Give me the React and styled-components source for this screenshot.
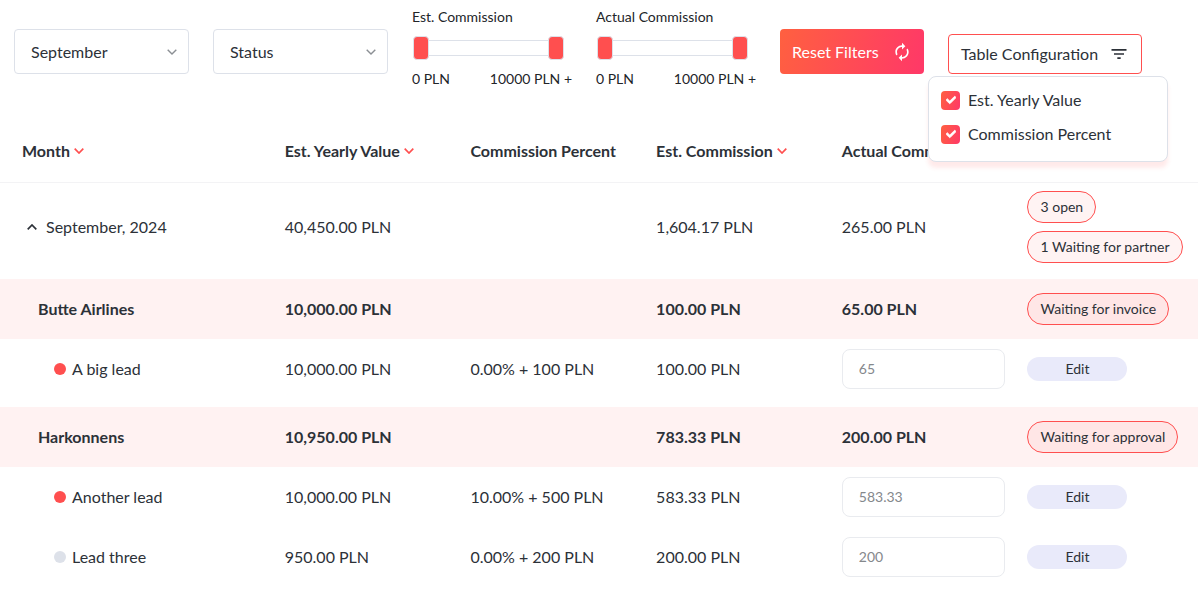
import React, { useState } from "react";
import styled, { createGlobalStyle } from "styled-components";
import { MdAutorenew, MdFilterList } from "react-icons/md";
import { FaCheck } from "react-icons/fa";

const GlobalStyle = createGlobalStyle`
  * {
    box-sizing: border-box;
  }
  body {
    margin: 0;
    background: #fff;
    color: #2c3138;
    font-family: "Lato", sans-serif;
    font-size: 16px;
    line-height: 24px;
  }
  button, input, select {
    font-family: inherit;
    color: inherit;
  }
`;

const Toolbar = styled.section`
  display: flex;
  align-items: center;
  gap: 24px;
  padding: 5px 14px 23px;
`;

const SelectBox = styled.div`
  display: grid;
  grid-template-columns: 1fr 32px;
  align-items: center;
  width: 175px;
  height: 45px;
  border: 1px solid #dde1e9;
  border-radius: 4px;
  color: #8b8f94;
`;

const StyledSelect = styled.select`
  grid-area: 1 / 1 / 2 / 3;
  height: 100%;
  padding: 0 32px 0 16px;
  border: none;
  border-radius: 4px;
  background: transparent;
  color: #2c3138;
  font-size: 16px;
  appearance: none;
`;

const SelectIcon = styled.span`
  grid-area: 1 / 2;
  display: flex;
  justify-content: center;
  pointer-events: none;
`;

const RangeGroup = styled.div`
  width: 160px;
  padding-bottom: 7px;
  color: #222529;
  font-size: 14px;
`;

const RangeSlider = styled.div`
  display: grid;
  align-items: center;
  height: 38px;
  margin: 0 8px 0 1px;
`;

const RangeTrack = styled.div`
  grid-area: 1 / 1;
  height: 16px;
  margin: 0 8px;
  border: 1px solid #dde1e9;
`;

const RangeInput = styled.input`
  grid-area: 1 / 1;
  width: 100%;
  height: 24px;
  margin: 0;
  background: transparent;
  appearance: none;
  pointer-events: none;

  &::-webkit-slider-thumb {
    width: 16px;
    height: 24px;
    border: 1px solid #dde1e9;
    border-radius: 4px;
    background: #ff4f4f;
    appearance: none;
    pointer-events: auto;
    cursor: pointer;
  }
`;

const RangeValues = styled.div`
  display: flex;
  justify-content: space-between;
  white-space: nowrap;
`;

const ResetBtn = styled.button`
  display: flex;
  align-items: center;
  justify-content: space-between;
  width: 144px;
  height: 45px;
  padding: 0 12px;
  border: none;
  border-radius: 4px;
  background: linear-gradient(105deg, #ff6040, #ff3868);
  color: #fff;
  font-size: 16px;
  line-height: 24px;
  white-space: nowrap;
  cursor: pointer;
`;

const Config = styled.div`
  position: relative;
  padding-top: 5px;
`;

const ConfigBtn = styled.button`
  display: flex;
  align-items: center;
  justify-content: space-between;
  width: 194px;
  height: 40px;
  padding: 0 12px;
  border: 1px solid #ff4f4f;
  border-radius: 4px;
  background: #fff;
  font-size: 16px;
  line-height: 24px;
  white-space: nowrap;
  cursor: pointer;
`;

const ConfigMenu = styled.div`
  position: absolute;
  top: calc(100% + 2px);
  left: -20px;
  width: 240px;
  padding: 6px 12px 10px;
  border: 1px solid #dde1e9;
  border-radius: 8px;
  background: #fff;
  box-shadow: 0 6px 4px rgba(255, 79, 79, 0.12);
`;

const CheckLabel = styled.label`
  display: flex;
  align-items: center;
  gap: 8px;
  height: 34px;
  cursor: pointer;
`;

const CheckWrap = styled.span`
  display: grid;
  place-items: center;
  color: #fff;

  svg {
    grid-area: 1 / 1;
    stroke: currentColor;
    stroke-width: 40px;
    pointer-events: none;
  }
`;

const Checkbox = styled.input`
  grid-area: 1 / 1;
  width: 19px;
  height: 19px;
  margin: 0;
  border: 1px solid #dde1e9;
  border-radius: 4px;
  appearance: none;

  &:checked {
    border: none;
    background: linear-gradient(105deg, #ff6040, #ff3868);
  }
`;

const Table = styled.table`
  width: 100%;
  table-layout: fixed;
  border-collapse: collapse;
`;

const NameCol = styled.col`
  width: 23.1%;
`;

const ValueCol = styled.col`
  width: 15.5%;
`;

const Th = styled.th`
  height: 61px;
  padding: 0 8px;
  padding-left: ${(props) => (props.$first ? "22px" : "8px")};
  border-bottom: 1px solid #f3f3f5;
  font-weight: 700;
  text-align: left;
  white-space: nowrap;
`;

const SortBtn = styled.button`
  display: flex;
  align-items: center;
  gap: 4px;
  padding: 0;
  border: none;
  background: none;
  font-size: 16px;
  font-weight: 700;
  line-height: 24px;
  cursor: pointer;

  svg {
    color: #ff4f4f;
  }
`;

const Td = styled.td`
  padding: 0 8px;
  padding-left: ${(props) => props.$indent || 8}px;
  white-space: nowrap;
`;

const MonthRow = styled.tr`
  td {
    padding-top: 8px;
    padding-bottom: 16px;
  }
`;

const GroupRow = styled.tr`
  height: 60px;
  background: #fff2f2;
  font-weight: 700;
`;

const LeadRow = styled.tr`
  td {
    padding-top: 10px;
    padding-bottom: ${(props) => (props.$last ? "18px" : "10px")};
  }
`;

const MonthToggle = styled.button`
  display: flex;
  align-items: center;
  gap: 4px;
  padding: 0;
  border: none;
  background: none;
  font-size: 16px;
  line-height: 24px;
  cursor: pointer;
`;

const ToggleIcon = styled.span`
  display: flex;
  justify-content: center;
  width: 20px;
`;

const Badges = styled.div`
  display: flex;
  flex-direction: column;
  align-items: flex-start;
  gap: 8px;
`;

const Badge = styled.span`
  display: flex;
  align-items: center;
  height: 32px;
  padding: 0 12px;
  border: 1px solid #ff4f4f;
  border-radius: 16px;
  background: rgba(255, 79, 79, 0.07);
  font-size: 14px;
  font-weight: 400;
`;

const Lead = styled.div`
  display: flex;
  align-items: center;
  gap: 6px;
`;

const Dot = styled.span`
  width: 12px;
  height: 12px;
  border-radius: 50%;
  background: ${(props) => (props.$active ? "#ff4f4f" : "#dde1e9")};
`;

const CommissionInput = styled.input`
  display: block;
  width: calc(100% - 6px);
  height: 40px;
  padding: 0 16px;
  border: 1px solid #e9ebef;
  border-radius: 8px;
  background: #fff;
  color: #85888c;
  font-size: 14px;
`;

const EditBtn = styled.button`
  display: block;
  width: 100px;
  height: 24px;
  padding: 0;
  border: none;
  border-radius: 12px;
  background: #e9eafa;
  font-size: 14px;
  cursor: pointer;
`;

const groups = [
  {
    name: "Butte Airlines",
    yearly: "10,000.00 PLN",
    est: "100.00 PLN",
    actual: "65.00 PLN",
    status: "Waiting for invoice",
    leads: [
      {
        name: "A big lead",
        active: true,
        yearly: "10,000.00 PLN",
        percent: "0.00% + 100 PLN",
        est: "100.00 PLN",
        actual: "65",
      },
    ],
  },
  {
    name: "Harkonnens",
    yearly: "10,950.00 PLN",
    est: "783.33 PLN",
    actual: "200.00 PLN",
    status: "Waiting for approval",
    leads: [
      {
        name: "Another lead",
        active: true,
        yearly: "10,000.00 PLN",
        percent: "10.00% + 500 PLN",
        est: "583.33 PLN",
        actual: "583.33",
      },
      {
        name: "Lead three",
        active: false,
        yearly: "950.00 PLN",
        percent: "0.00% + 200 PLN",
        est: "200.00 PLN",
        actual: "200",
      },
    ],
  },
];

const Chevron = ({ up, thick }) => (
  <svg width="10" height="6" viewBox="0 0 10 6" fill="none" aria-hidden="true">
    <path
      d={up ? "M0.7 5.3 5 1 9.3 5.3" : "M0.7 0.7 5 5 9.3 0.7"}
      stroke="currentColor"
      strokeWidth={thick ? 1.7 : 1.4}
    />
  </svg>
);

const Select = ({ label, options }) => (
  <SelectBox>
    <StyledSelect aria-label={label}>
      {options.map((option) => (
        <option key={option}>{option}</option>
      ))}
    </StyledSelect>
    <SelectIcon>
      <Chevron />
    </SelectIcon>
  </SelectBox>
);

const Range = ({ label }) => {
  const [min, setMin] = useState(0);
  const [max, setMax] = useState(10000);

  return (
    <RangeGroup>
      <div>{label}</div>
      <RangeSlider>
        <RangeTrack />
        <RangeInput
          type="range"
          aria-label={`${label} from`}
          max="10000"
          value={min}
          onChange={(e) => setMin(Math.min(+e.target.value, max))}
        />
        <RangeInput
          type="range"
          aria-label={`${label} to`}
          max="10000"
          value={max}
          onChange={(e) => setMax(Math.max(+e.target.value, min))}
        />
      </RangeSlider>
      <RangeValues>
        <span>{min} PLN</span>
        <span>
          {max} PLN {max === 10000 && "+"}
        </span>
      </RangeValues>
    </RangeGroup>
  );
};

const CheckItem = ({ label, checked, onChange }) => (
  <CheckLabel>
    <CheckWrap>
      <Checkbox type="checkbox" checked={checked} onChange={onChange} />
      {checked && <FaCheck size={10} />}
    </CheckWrap>
    {label}
  </CheckLabel>
);

const SortHeader = ({ children, first }) => (
  <Th $first={first}>
    <SortBtn>
      {children}
      <Chevron thick />
    </SortBtn>
  </Th>
);

const App = () => {
  const [menuOpen, setMenuOpen] = useState(true);
  const [monthOpen, setMonthOpen] = useState(true);
  const [showYearly, setShowYearly] = useState(true);
  const [showPercent, setShowPercent] = useState(true);

  return (
    <>
      <GlobalStyle />
      <Toolbar>
        <Select label="Month" options={["September", "October"]} />
        <Select label="Status" options={["Status", "Open"]} />
        <Range label="Est. Commission" />
        <Range label="Actual Commission" />
        <ResetBtn>
          Reset Filters
          <MdAutorenew size={20} />
        </ResetBtn>
        <Config>
          <ConfigBtn onClick={() => setMenuOpen(!menuOpen)}>
            Table Configuration
            <MdFilterList size={20} />
          </ConfigBtn>
          {menuOpen && (
            <ConfigMenu>
              <CheckItem
                label="Est. Yearly Value"
                checked={showYearly}
                onChange={() => setShowYearly(!showYearly)}
              />
              <CheckItem
                label="Commission Percent"
                checked={showPercent}
                onChange={() => setShowPercent(!showPercent)}
              />
            </ConfigMenu>
          )}
        </Config>
      </Toolbar>
      <Table>
        <colgroup>
          <NameCol />
          {showYearly && <ValueCol />}
          {showPercent && <ValueCol />}
          <ValueCol />
          <ValueCol />
          <col />
        </colgroup>
        <thead>
          <tr>
            <SortHeader first>Month</SortHeader>
            {showYearly && <SortHeader>Est. Yearly Value</SortHeader>}
            {showPercent && <Th>Commission Percent</Th>}
            <SortHeader>Est. Commission</SortHeader>
            <SortHeader>Actual Commission</SortHeader>
            <Th />
          </tr>
        </thead>
        <tbody>
          <MonthRow>
            <Td $indent={22}>
              <MonthToggle onClick={() => setMonthOpen(!monthOpen)}>
                <ToggleIcon>
                  <Chevron up={monthOpen} thick />
                </ToggleIcon>
                September, 2024
              </MonthToggle>
            </Td>
            {showYearly && <Td>40,450.00 PLN</Td>}
            {showPercent && <Td />}
            <Td>1,604.17 PLN</Td>
            <Td>265.00 PLN</Td>
            <Td>
              <Badges>
                <Badge>3 open</Badge>
                <Badge>1 Waiting for partner</Badge>
              </Badges>
            </Td>
          </MonthRow>
          {monthOpen &&
            groups.map((group) => (
              <React.Fragment key={group.name}>
                <GroupRow>
                  <Td $indent={38}>{group.name}</Td>
                  {showYearly && <Td>{group.yearly}</Td>}
                  {showPercent && <Td />}
                  <Td>{group.est}</Td>
                  <Td>{group.actual}</Td>
                  <Td>
                    <Badges>
                      <Badge>{group.status}</Badge>
                    </Badges>
                  </Td>
                </GroupRow>
                {group.leads.map((lead, i) => (
                  <LeadRow key={lead.name} $last={i === group.leads.length - 1}>
                    <Td $indent={54}>
                      <Lead>
                        <Dot $active={lead.active} />
                        {lead.name}
                      </Lead>
                    </Td>
                    {showYearly && <Td>{lead.yearly}</Td>}
                    {showPercent && <Td>{lead.percent}</Td>}
                    <Td>{lead.est}</Td>
                    <Td>
                      <CommissionInput
                        aria-label={`Actual commission for ${lead.name}`}
                        defaultValue={lead.actual}
                      />
                    </Td>
                    <Td>
                      <EditBtn>Edit</EditBtn>
                    </Td>
                  </LeadRow>
                ))}
              </React.Fragment>
            ))}
        </tbody>
      </Table>
    </>
  );
};

export default App;
